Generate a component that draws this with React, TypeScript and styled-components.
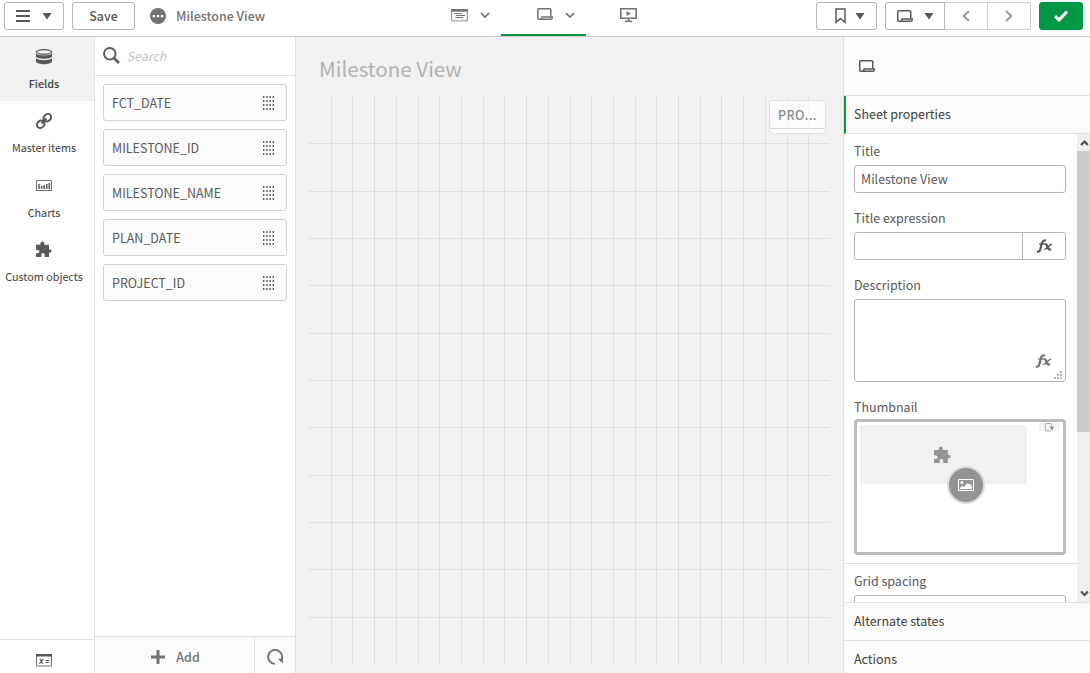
import React from 'react';
import styled, { createGlobalStyle, css } from 'styled-components';

const Global = createGlobalStyle`
  * { box-sizing: border-box; }
  body { margin: 0; background: #f1f1f1; }
  svg { display: block; flex: none; }
  input, textarea, button { font: inherit; color: inherit; margin: 0; outline: none; }
`;

const Page = styled.div`
  width: 1090px;
  height: 673px;
  overflow: hidden;
  display: flex;
  flex-direction: column;
  font-family: 'Noto Sans CJK SC', 'Open Sans', sans-serif;
  font-size: 12.5px;
  line-height: 18px;
  color: #595959;
`;

const Toolbar = styled.header`
  height: 37px;
  flex: none;
  display: grid;
  grid-template-columns: 397px 1fr 345px;
  background: #fff;
  border-bottom: 1px solid #ccc;
`;

const ToolbarGroup = styled.div<{ $end?: boolean }>`
  display: flex;
  align-items: flex-start;
  padding: 2px 7px 0 4px;
  gap: 8px;
  justify-content: ${p => (p.$end ? 'flex-end' : 'flex-start')};
`;

const Button = styled.button<{ $width: number; $gap?: number; $indent?: number; $primary?: boolean }>`
  width: ${p => p.$width}px;
  height: 28px;
  padding: 0 0 0 ${p => p.$indent ?? 0}px;
  display: flex;
  align-items: center;
  justify-content: center;
  gap: ${p => p.$gap ?? 0}px;
  border: 1px solid ${p => (p.$primary ? '#009845' : '#b3b3b3')};
  border-radius: 3px;
  background: ${p => (p.$primary ? '#009845' : '#fff')};
  font-weight: 500;
`;

const ButtonGroup = styled.div`
  display: flex;
  ${Button} { border-radius: 0; }
  ${Button} + ${Button} { border-left: 0; border-color: #ccc; }
  ${Button}:first-child { border-radius: 3px 0 0 3px; }
  ${Button}:last-child { border-radius: 0 3px 3px 0; }
`;

const AppTitle = styled.div`
  display: flex;
  align-items: center;
  gap: 10px;
  height: 28px;
  padding-left: 7px;
  color: #737373;
  font-weight: 500;
`;

const Tabs = styled.nav`
  display: flex;
  padding-left: 19px;
  height: 36px;
`;

const Tab = styled.div<{ $active?: boolean; $menu?: boolean }>`
  width: 85px;
  display: flex;
  justify-content: center;
  gap: 12px;
  padding: 8px 0 0 ${p => (p.$menu ? 24 : 0)}px;
  border-bottom: 2px solid ${p => (p.$active ? '#009845' : 'transparent')};
  height: 36px;
`;

const Body = styled.div`
  flex: 1;
  min-height: 0;
  display: grid;
  grid-template-columns: 95px 201px 547px 247px;
  grid-template-rows: minmax(0, 1fr);
`;

const Rail = styled.aside`
  display: flex;
  flex-direction: column;
  background: #fff;
  border-right: 1px solid #e1e1e1;
`;

const RailItems = styled.div`
  height: 258px;
  border-bottom: 1px solid #e1e1e1;
`;

const RailItem = styled.div<{ $active?: boolean }>`
  height: ${p => (p.$active ? 64 : 64.5)}px;
  padding: 11px 6px 0 0;
  display: flex;
  flex-direction: column;
  align-items: center;
  gap: 9px;
  font-size: 10.8px;
  line-height: 16px;
  white-space: nowrap;
  font-weight: ${p => (p.$active ? 500 : 400)};
  color: #404040;
  background: ${p => (p.$active ? '#f1f1f1' : '#fff')};
`;

const RailFooter = styled.div`
  margin-top: auto;
  height: 34px;
  padding: 14px 6px 0 0;
  display: flex;
  justify-content: center;
  border-top: 1px solid #e1e1e1;
`;

const FieldPanel = styled.section`
  display: flex;
  flex-direction: column;
  background: #fff;
  border-right: 1px solid #e1e1e1;
`;

const SearchBar = styled.label`
  height: 39px;
  display: flex;
  align-items: center;
  gap: 6px;
  padding: 0 0 1px 8px;
  border-bottom: 1px solid #e1e1e1;
`;

const SearchInput = styled.input`
  width: 150px;
  height: 20px;
  border: 0;
  padding: 0 0 0 0.500px;
  font-style: italic;
  &::placeholder { color: #c4c4c4; opacity: 1; }
`;

const FieldList = styled.div`
  display: flex;
  flex-direction: column;
  gap: 8px;
  padding: 8px;
`;

const FieldRow = styled.div`
  height: 37px;
  display: flex;
  align-items: center;
  justify-content: space-between;
  padding: 0 12px 0 8px;
  border: 1px solid #d2d2d2;
  border-radius: 3px;
  background: #fbfbfb;
`;

const FieldFooter = styled.div`
  margin-top: auto;
  height: 37px;
  display: grid;
  grid-template-columns: 160px 40px;
  background: #fbfbfb;
  border-top: 1px solid #e1e1e1;
`;

const FooterButton = styled.div<{ $divided?: boolean }>`
  display: flex;
  align-items: center;
  justify-content: center;
  gap: 11px;
  padding: 4px 0 0 ${p => (p.$divided ? 2 : 0)}px;
  color: #737373;
  font-weight: 500;
  border-right: ${p => (p.$divided ? '1px solid #e1e1e1' : '0')};
`;

const Sheet = styled.main`
  background: #f1f1f1;
  padding: 18px 13px 0;
`;

const SheetTitle = styled.h1`
  margin: 0 0 0 10px;
  height: 41px;
  font-size: 20.6px;
  line-height: 26px;
  font-weight: 400;
  color: #b3b3b3;
`;

const SheetCanvas = styled.div`
  position: relative;
  width: 521px;
  height: 568px;
`;

const FilterPane = styled.div`
  position: absolute;
  left: 460px;
  top: 4px;
  width: 57px;
  height: 34px;
  padding: 0 8px;
  border: 1px solid #e0e0e0;
  border-radius: 3px;
  background: rgba(255, 255, 255, 0.7);
  color: #8c8c8c;
  font-weight: 500;
  letter-spacing: 0.3px;
  line-height: 28px;
  box-shadow: inset 0 -4px 0 #fafafa, inset 0 -5px 0 #d6d6d6;
`;

const Properties = styled.aside`
  display: flex;
  flex-direction: column;
  min-height: 0;
  overflow: hidden;
  background: #fbfbfb;
  border-left: 1px solid #e1e1e1;
`;

const PropertiesHead = styled.div`
  height: 59px;
  flex: none;
  padding: 23px 0 0 15px;
  border-bottom: 1px solid #e1e1e1;
`;

const Section = styled.div<{ $open?: boolean }>`
  height: 38px;
  flex: none;
  padding-left: ${p => (p.$open ? 8 : 10)}px;
  line-height: 36px;
  color: #404040;
  border-bottom: 1px solid #e1e1e1;
  ${p => p.$open && css`border-left: 2px solid #009845;`}
`;

const ScrollArea = styled.div`
  height: 469px;
  flex: none;
  overflow: hidden;
  display: grid;
  grid-template-columns: 233px 13px;
  background: #fff;
  border-bottom: 1px solid #e1e1e1;
`;

const Form = styled.div`
  overflow: hidden;
  height: 468px;
`;

const FormGroup = styled.div`
  padding: 8px 11px 8px 10px;
  border-bottom: 1px solid #e1e1e1;
`;

const Field = styled.div<{ $space?: number }>`
  margin-bottom: ${p => p.$space ?? 16}px;
`;

const Label = styled.div`
  height: 23px;
  line-height: 18px;
`;

const inputBox = css`
  border: 1px solid #b3b3b3;
  border-radius: 3px;
  background: #fff;
`;

const Input = styled.input`
  display: block;
  width: 212px;
  height: 28px;
  padding: 0 6px 1px;
  ${inputBox}
`;

const ExpressionInput = styled.div`
  display: grid;
  grid-template-columns: 1fr 43px;
  width: 212px;
  height: 28px;
  ${inputBox}
`;

const ExpressionButton = styled.div`
  display: flex;
  align-items: center;
  justify-content: center;
  border-left: 1px solid #b3b3b3;
`;

const TextBox = styled.div`
  width: 212px;
  height: 83px;
  display: flex;
  align-items: flex-end;
  justify-content: flex-end;
  gap: 2px;
  padding: 0 3px 2px;
  ${inputBox}
`;

const FxSlot = styled.div`
  padding-bottom: 11px;
`;

const Thumbnail = styled.div`
  position: relative;
  width: 212px;
  height: 136px;
  margin-top: -2px;
  border: 3px solid #bcbcbc;
  border-radius: 4px;
  background: #fff;
  padding: 3px;
`;

const ThumbObject = styled.div`
  width: 167px;
  height: 59px;
  padding: 21px 0 0 74px;
  background: #f1f1f1;
`;

const ThumbFilter = styled.div`
  position: absolute;
  left: 182px;
  top: 1px;
  width: 21px;
  height: 8px;
  display: flex;
  justify-content: center;
  align-items: center;
  background: #f4f4f4;
`;

const ThumbBadge = styled.div`
  position: absolute;
  left: 90px;
  top: 44px;
  width: 38px;
  height: 38px;
  display: flex;
  align-items: center;
  justify-content: center;
  border: 2px solid #dcdcdc;
  border-radius: 50%;
  background: #949494;
`;

const Scrollbar = styled.div`
  height: 468px;
  background: #f0f0f0;
  display: flex;
  flex-direction: column;
`;

const ScrollArrow = styled.div`
  height: 17px;
  padding-left: 3px;
  display: flex;
  align-items: center;
`;

const ScrollThumb = styled.div`
  height: 281px;
  margin-bottom: auto;
  background: #cbcbcb;
`;

const Caret = () => (
  <svg width="10" height="8" viewBox="0 0 10 8"><path d="M.5 1h9L5 7.5z" fill="#595959" /></svg>
);

const MenuIcon = () => (
  <svg width="14" height="14" viewBox="0 0 14 14"><path d="M0 2h14M0 7h14M0 12h14" stroke="#595959" strokeWidth="2" /></svg>
);

const MoreIcon = () => (
  <svg width="16" height="16" viewBox="0 0 16 16">
    <circle cx="8" cy="8" r="8" fill="#737373" />
    <path d="M2.7 7h2.4v2.2H2.7zM6.8 7h2.4v2.2H6.8zM10.9 7h2.4v2.2h-2.4z" fill="#fff" />
  </svg>
);

const SheetIcon = ({ color = '#595959' }: { color?: string }) => (
  <svg width="16" height="13" viewBox="0 0 16 13" fill="none" stroke={color} strokeWidth="1.5">
    <path d="M4.5 11.25H1.75a1 1 0 0 1-1-1V1.75a1 1 0 0 1 1-1h11a1 1 0 0 1 1 1V8.5" />
    <path d="M3.5 11.25c1.2 0 1.5-.6 1.5-2.2h10.25v.7a1.5 1.5 0 0 1-1.5 1.5z" />
  </svg>
);

const DataIcon = () => (
  <svg width="17" height="14" viewBox="0 0 17 14">
    <path d="M.6 2.5v10h15.8v-10" fill="none" stroke="#999" strokeWidth="1.2" />
    <path d="M0 1h17v2.7H0z" fill="#737373" />
    <path d="M0 11.8h17v1.7H0z" fill="#bbb" />
    <path d="M3 5.5h8M5 7.5h9M4.5 9.5h7.5" stroke="#737373" strokeWidth="1" />
  </svg>
);

const StoryIcon = () => (
  <svg width="17" height="14" viewBox="0 0 17 14">
    <path d="M.8.8h15.4v9.4H.8zM8.5 10v3M5 13.2h7" fill="none" stroke="#737373" strokeWidth="1.6" />
    <path d="M6.5 3v5l4.5-2.5z" fill="#737373" />
  </svg>
);

const ChevronIcon = () => (
  <svg width="10" height="14" viewBox="0 0 10 14"><path d="M1 5.2l4 3.9 4-3.9" fill="none" stroke="#737373" strokeWidth="1.7" /></svg>
);

const BookmarkIcon = () => (
  <svg width="11" height="16" viewBox="0 0 11 16"><path d="M1 1h9v13.4l-4.5-4-4.5 4z" fill="none" stroke="#595959" strokeWidth="1.5" /></svg>
);

const ArrowIcon = ({ right }: { right?: boolean }) => (
  <svg width="8" height="12" viewBox="0 0 8 12">
    <path d={right ? 'M1 1l5.2 5-5.2 5' : 'M7 1L1.8 6 7 11'} fill="none" stroke="#999" strokeWidth="2" />
  </svg>
);

const CheckIcon = () => (
  <svg width="14" height="12" viewBox="0 0 14 12"><path d="M1 6.2l4 3.8L13 1.5" fill="none" stroke="#fff" strokeWidth="3" /></svg>
);

const DatabaseIcon = () => (
  <svg width="16" height="18" viewBox="0 0 16 18">
    <ellipse cx="8" cy="3.9" rx="7.4" ry="2.3" fill="#f1f1f1" stroke="#595959" strokeWidth="1.3" />
    <path d="M0 5.4c2 2.6 14 2.6 16 0v3c-1.5 3-14.5 3-16 0zM0 10.2c2 2.6 14 2.6 16 0v3.400c-1.5 3.600-14.500 3.600-16 0z" fill="#595959" />
  </svg>
);

const LinkIcon = () => (
  <svg width="18" height="18" viewBox="0 0 18 18">
    <g transform="rotate(-45 9 9)" fill="none" stroke="#595959" strokeWidth="2">
      <rect x="0.3" y="5.7" width="8" height="6.6" rx="3.3" />
      <rect x="9.7" y="5.7" width="8" height="6.6" rx="3.3" />
      <path d="M5.5 9h7" />
    </g>
  </svg>
);

const ChartIcon = () => (
  <svg width="16" height="18" viewBox="0 0 16 18">
    <path d="M.5 3.5h15v10H.5z" fill="none" stroke="#737373" />
    <path d="M3 7v5M5.7 9v3M8.2 8v4M10.8 7v5M13.3 6v6" stroke="#595959" strokeWidth="1.5" />
  </svg>
);

const PuzzleIcon = ({ color = '#595959', size = 16 }: { color?: string; size?: number }) => (
  <svg width={size} height={size + 2} viewBox="0 0 16 18">
    <path d="M0 3.7h4.5V2.3a1.8 1.8 0 0 1 3.7 0v1.4H13v4.7h1.2a1.7 1.7 0 0 1 0 3.3H13V16H8.7v-2.2a1.7 1.7 0 0 0-3.4 0V16H0v-3.8h1.8a1.6 1.6 0 0 0 0-3.2H0z" fill={color} />
  </svg>
);

const VariableIcon = () => (
  <svg width="16" height="13" viewBox="0 0 16 13">
    <path d="M.5 1v11.5h15V1" fill="none" stroke="#737373" />
    <path d="M0 0h16v2.5H0z" fill="#595959" />
    <path d="M0 11h16v2H0z" fill="#bbb" />
    <path d="M3.7 5.3c2-.5 1.2 4.3 3.2 4M7.6 5.3c-1.500-.2-2.800 4.400-4.500 4" fill="none" stroke="#595959" strokeWidth="1.2" />
    <path d="M9.500 6.500H13M9.500 8.500H13" fill="none" stroke="#595959" strokeWidth="1" />
  </svg>
);

const SearchIcon = () => (
  <svg width="17" height="17" viewBox="0 0 17 17" fill="none" stroke="#595959">
    <circle cx="6.8" cy="6.8" r="5.8" strokeWidth="1.9" />
    <path d="M11 11l5 5" strokeWidth="2.7" />
  </svg>
);

const GripIcon = () => (
  <svg width="11" height="14" viewBox="0 0 11 14">
    {[0, 4, 8, 12].map(y => [0, 3.2, 6.4, 9.6].map(x => (
      <rect key={`${x}-${y}`} x={x} y={y} width="1.4" height="2" fill="#595959" />
    )))}
  </svg>
);

const PlusIcon = () => (
  <svg width="14" height="14" viewBox="0 0 14 14"><path d="M7 0v14M0 7h14" stroke="#737373" strokeWidth="3" /></svg>
);

const RefreshIcon = () => (
  <svg width="17" height="16" viewBox="0 0 17 16">
    <path d="M7.8 14.9A7 7 0 1 1 13.8 12" fill="none" stroke="#737373" strokeWidth="1.9" />
    <path d="M10.8 9.8h5v5z" fill="#737373" />
  </svg>
);

const FxIcon = ({ color = '#595959' }: { color?: string }) => (
  <svg width="17" height="14" viewBox="0 0 17 14" fill="none" stroke={color}>
    <path d="M.8 12.6c3.2.8 3.4-1.6 4.2-5.1S6.5.7 10 1.5" strokeWidth="2.2" />
    <path d="M3.2 5h5.6" strokeWidth="1.4" />
    <path d="M9 5.5c2.6-1.4 2.3 6.8 5.9 4.6" strokeWidth="2.4" />
    <path d="M16 5.4c-2.200-1-5.200 5.900-7.700 4.800" strokeWidth="1.6" />
  </svg>
);

const ResizeIcon = () => (
  <svg width="8" height="8" viewBox="0 0 8 8">
    <path d="M6 0h2v2H6zM3 3h2v2H3zM6 3h2v2H6zM0 6h2v2H0zM3 6h2v2H3zM6 6h2v2H6z" fill="#b3b3b3" />
  </svg>
);

const ImageIcon = () => (
  <svg width="16" height="12" viewBox="0 0 16 12">
    <path d="M.5.5h15v11H.5z" fill="none" stroke="#fff" />
    <circle cx="4" cy="3.6" r="1.6" fill="#fff" />
    <path d="M2 10V8.7l2.6-2L6 7.900l3.500-4 1.500 1.500 1-.8 2 3V10z" fill="#fff" />
  </svg>
);

const FilterMiniIcon = () => (
  <svg width="9" height="9" viewBox="0 0 9 9">
    <path d="M5.5 8H1.500a1 1 0 0 1-1-1V1.500a1 1 0 0 1 1-1h4a1 1 0 0 1 1 1V3" fill="none" stroke="#aaa" />
    <path d="M4.500 3.500H9L7.200 7.500z" fill="#8c8c8c" />
  </svg>
);

const ScrollChevron = ({ down }: { down?: boolean }) => (
  <svg width="9" height="8" viewBox="0 0 9 8">
    <path d={down ? 'M1 1.5l3.5 3.5L8 1.5' : 'M1 6l3.5-3.5L8 6'} fill="none" stroke="#505050" strokeWidth="2.2" />
  </svg>
);

const columns = [22, 43, 65, 87, 109, 130, 152, 174, 195, 217, 239, 261, 282, 304, 326, 347, 369, 391, 412, 434, 456, 478, 499];
const rows = [47, 95, 142, 189, 237, 284, 331, 379, 426, 473, 521];

const GridLines = () => (
  <svg width="521" height="568" viewBox="0 0 521 568" fill="#999" fillOpacity="0.2">
    {columns.map(x => <rect key={x} x={x} y="0" width="1" height="568" />)}
    {rows.map(y => <rect key={y} x="0" y={y} width="521" height="1" />)}
  </svg>
);

const fields = ['FCT_DATE', 'MILESTONE_ID', 'MILESTONE_NAME', 'PLAN_DATE', 'PROJECT_ID'];

export default function App() {
  return (
    <Page>
      <Global />
      <Toolbar>
        <ToolbarGroup>
          <Button $width={60} $gap={12}><MenuIcon /><Caret /></Button>
          <Button $width={63}>Save</Button>
          <AppTitle><MoreIcon />Milestone View</AppTitle>
        </ToolbarGroup>
        <Tabs>
          <Tab $menu><DataIcon /><ChevronIcon /></Tab>
          <Tab $menu $active><SheetIcon color="#737373" /><ChevronIcon /></Tab>
          <Tab><StoryIcon /></Tab>
        </Tabs>
        <ToolbarGroup $end>
          <Button $width={61} $gap={9} $indent={6}><BookmarkIcon /><Caret /></Button>
          <ButtonGroup>
            <Button $width={60} $gap={11}><SheetIcon /><Caret /></Button>
            <Button $width={43}><ArrowIcon /></Button>
            <Button $width={43}><ArrowIcon right /></Button>
          </ButtonGroup>
          <Button $width={44} $primary><CheckIcon /></Button>
        </ToolbarGroup>
      </Toolbar>
      <Body>
        <Rail>
          <RailItems>
            <RailItem $active><DatabaseIcon />Fields</RailItem>
            <RailItem><LinkIcon />Master items</RailItem>
            <RailItem><ChartIcon />Charts</RailItem>
            <RailItem><PuzzleIcon />Custom objects</RailItem>
          </RailItems>
          <RailFooter><VariableIcon /></RailFooter>
        </Rail>
        <FieldPanel>
          <SearchBar><SearchIcon /><SearchInput placeholder="Search" /></SearchBar>
          <FieldList>
            {fields.map(name => <FieldRow key={name}>{name}<GripIcon /></FieldRow>)}
          </FieldList>
          <FieldFooter>
            <FooterButton $divided><PlusIcon />Add</FooterButton>
            <FooterButton><RefreshIcon /></FooterButton>
          </FieldFooter>
        </FieldPanel>
        <Sheet>
          <SheetTitle>Milestone View</SheetTitle>
          <SheetCanvas>
            <GridLines />
            <FilterPane>PRO...</FilterPane>
          </SheetCanvas>
        </Sheet>
        <Properties>
          <PropertiesHead><SheetIcon /></PropertiesHead>
          <Section $open>Sheet properties</Section>
          <ScrollArea>
            <Form>
              <FormGroup>
                <Field><Label>Title</Label><Input defaultValue="Milestone View" /></Field>
                <Field>
                  <Label>Title expression</Label>
                  <ExpressionInput><span /><ExpressionButton><FxIcon /></ExpressionButton></ExpressionInput>
                </Field>
                <Field>
                  <Label>Description</Label>
                  <TextBox><FxSlot><FxIcon color="#737373" /></FxSlot><ResizeIcon /></TextBox>
                </Field>
                <Field $space={0}>
                  <Label>Thumbnail</Label>
                  <Thumbnail>
                    <ThumbObject><PuzzleIcon color="#949494" size={17} /></ThumbObject>
                    <ThumbFilter><FilterMiniIcon /></ThumbFilter>
                    <ThumbBadge><ImageIcon /></ThumbBadge>
                  </Thumbnail>
                </Field>
              </FormGroup>
              <FormGroup>
                <Field><Label>Grid spacing</Label><Input /></Field>
              </FormGroup>
            </Form>
            <Scrollbar>
              <ScrollArrow><ScrollChevron /></ScrollArrow>
              <ScrollThumb />
              <ScrollArrow><ScrollChevron down /></ScrollArrow>
            </Scrollbar>
          </ScrollArea>
          <Section>Alternate states</Section>
          <Section>Actions</Section>
        </Properties>
      </Body>
    </Page>
  );
}
